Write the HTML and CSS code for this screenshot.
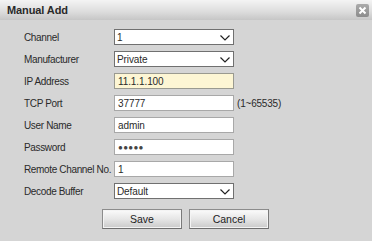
FILE: index.html
```html
<!DOCTYPE html>
<html>
<head>
<meta charset="utf-8">
<link rel="stylesheet" href="styles.css">
</head>
<body>
<div class="dialog">
  <div class="titlebar">
    <span class="title">Manual Add</span>
    <span class="close"><svg width="13" height="13" viewBox="0 0 13 13"><path d="M3.5 3.5 L9.5 9.5 M9.5 3.5 L3.5 9.5" stroke="#fff" stroke-width="2" fill="none"/></svg></span>
  </div>
  <div class="form">
    <label class="lbl">Channel</label>
    <div class="field select"><span>1</span><svg class="chev" width="10" height="6" viewBox="0 0 10 6"><path d="M0.5 0.5 L5 5 L9.5 0.5" stroke="#222" stroke-width="1.2" fill="none"/></svg></div>
    <span></span>

    <label class="lbl">Manufacturer</label>
    <div class="field select"><span>Private</span><svg class="chev" width="10" height="6" viewBox="0 0 10 6"><path d="M0.5 0.5 L5 5 L9.5 0.5" stroke="#222" stroke-width="1.2" fill="none"/></svg></div>
    <span></span>

    <label class="lbl">IP Address</label>
    <div class="field input hl">11.1.1.100</div>
    <span></span>

    <label class="lbl">TCP Port</label>
    <div class="field input">37777</div>
    <span class="hint">(1~65535)</span>

    <label class="lbl">User Name</label>
    <div class="field input">admin</div>
    <span></span>

    <label class="lbl">Password</label>
    <div class="field input pwd">●●●●●</div>
    <span></span>

    <label class="lbl">Remote Channel No.</label>
    <div class="field input">1</div>
    <span></span>

    <label class="lbl">Decode Buffer</label>
    <div class="field select"><span>Default</span><svg class="chev" width="10" height="6" viewBox="0 0 10 6"><path d="M0.5 0.5 L5 5 L9.5 0.5" stroke="#222" stroke-width="1.2" fill="none"/></svg></div>
    <span></span>
  </div>
  <div class="buttons">
    <button class="btn">Save</button>
    <button class="btn">Cancel</button>
  </div>
</div>
</body>
</html>
```
FILE: styles.css
```css
html, body {
  margin: 0;
  padding: 0;
}
body {
  width: 372px;
  height: 241px;
  background: #d5d5d5;
  font-family: "Liberation Sans", Arial, sans-serif;
  font-size: 10px;
  color: #2a2a2a;
  overflow: hidden;
}
.dialog {
  width: 372px;
  height: 241px;
}
.titlebar {
  height: 20px;
  display: flex;
  align-items: center;
  justify-content: space-between;
  padding: 0 3px 0 7px;
  background: linear-gradient(#f4f4f4, #dcdcdc 60%, #c6c6c6);
  box-sizing: border-box;
}
.title {
  font-weight: bold;
  font-size: 11px;
  letter-spacing: -0.1px;
  color: #2a2a2a;
}
.close {
  width: 13px;
  height: 13px;
  background: linear-gradient(#aaaaaa, #8c8c8c);
  border-radius: 2px;
  display: flex;
}
.form {
  display: grid;
  grid-template-columns: 90px 120px auto;
  grid-auto-rows: 16px;
  row-gap: 6px;
  padding: 9px 0 0 24px;
  align-items: center;
}
.lbl {
  color: #2a2a2a;
  white-space: nowrap;
  letter-spacing: -0.35px;
}
.field {
  height: 16px;
  box-sizing: border-box;
  border: 1px solid #8a8a8a;
  background: #fff;
  display: flex;
  align-items: center;
  white-space: nowrap;
  letter-spacing: -0.1px;
}
.select {
  justify-content: space-between;
  padding: 1px 3px 0 2px;
  border-color: #707070;
}
.input {
  padding: 0 3px;
  border-color: #a8a8a8;
}
.hl {
  background: #fdf6d4;
  border-color: #9a9a90;
}
.pwd {
  font-size: 8px;
  letter-spacing: 0.3px;
  color: #444;
}
.hint {
  padding-left: 3px;
  white-space: nowrap;
  letter-spacing: -0.2px;
}
.buttons {
  display: flex;
  gap: 7px;
  padding: 10px 0 0 102px;
}
.btn {
  width: 80px;
  height: 20px;
  margin: 0;
  padding: 0;
  font-family: "Liberation Sans", Arial, sans-serif;
  font-size: 10.5px;
  color: #222;
  border: 1px solid #8c8c8c;
  border-bottom-color: #6e6e6e;
  border-right-color: #7a7a7a;
  background: linear-gradient(#fbfbfb, #e6e6e6 50%, #cacaca);
  box-shadow: inset 0 0 0 1px #f4f4f4;
}
```
